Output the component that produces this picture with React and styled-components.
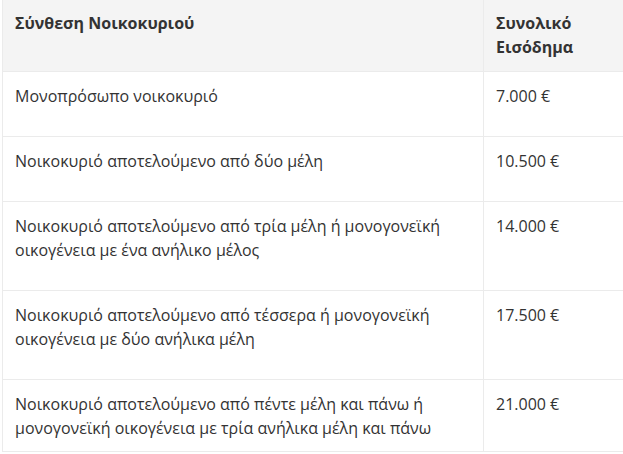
import React from "react";
import styled, { createGlobalStyle } from "styled-components";

const Global = createGlobalStyle`
  html, body { margin: 0; padding: 0; background: #ffffff; overflow: hidden; }
  body { font-family: "Open Sans", "Noto Sans", sans-serif; }
`;

const Table = styled.table`
  margin-left: 2px;
  width: 760px;
  table-layout: fixed;
  border-collapse: separate;
  border-spacing: 0;
  border-left: 1px solid #ebebeb;
  font-family: "Open Sans", "Noto Sans", sans-serif;
  font-size: 16px;
  line-height: 24px;
  color: #333333;
`;

const HeadCell = styled.th`
  text-align: left;
  vertical-align: top;
  font-weight: 700;
  color: #333333;
  background: #f4f4f4;
  padding: 11px 12px 12px;
  border-bottom: 1px solid #ebebeb;
  border-left: ${(p) => (p.$divider ? "1px solid #ebebeb" : "none")};
`;

const Cell = styled.td`
  vertical-align: top;
  padding: 12px 12px ${(p) => (p.$last ? "11px" : "28px")};
  border-bottom: 1px solid #ebebeb;
  border-left: ${(p) => (p.$divider ? "1px solid #ebebeb" : "none")};
`;

const rows = [
  ["Μονοπρόσωπο νοικοκυριό", "7.000 €"],
  ["Νοικοκυριό αποτελούμενο από δύο μέλη", "10.500 €"],
  [
    "Νοικοκυριό αποτελούμενο από τρία μέλη ή μονογονεϊκή οικογένεια με ένα ανήλικο μέλος",
    "14.000 €",
  ],
  [
    "Νοικοκυριό αποτελούμενο από τέσσερα ή μονογονεϊκή οικογένεια με δύο ανήλικα μέλη",
    "17.500 €",
  ],
  [
    "Νοικοκυριό αποτελούμενο από πέντε μέλη και πάνω ή μονογονεϊκή οικογένεια με τρία ανήλικα μέλη και πάνω",
    "21.000 €",
  ],
];

export default function App() {
  return (
    <>
      <Global />
      <Table>
        <colgroup>
          <col style={{ width: "480px" }} />
          <col />
        </colgroup>
        <thead>
          <tr>
            <HeadCell>Σύνθεση Νοικοκυριού</HeadCell>
            <HeadCell $divider>
              Συνολικό
              <br />
              Εισόδημα
            </HeadCell>
          </tr>
        </thead>
        <tbody>
          {rows.map(([label, value], i) => (
            <tr key={i}>
              <Cell $last={i === rows.length - 1}>{label}</Cell>
              <Cell $divider $last={i === rows.length - 1}>
                {value}
              </Cell>
            </tr>
          ))}
        </tbody>
      </Table>
    </>
  );
}
